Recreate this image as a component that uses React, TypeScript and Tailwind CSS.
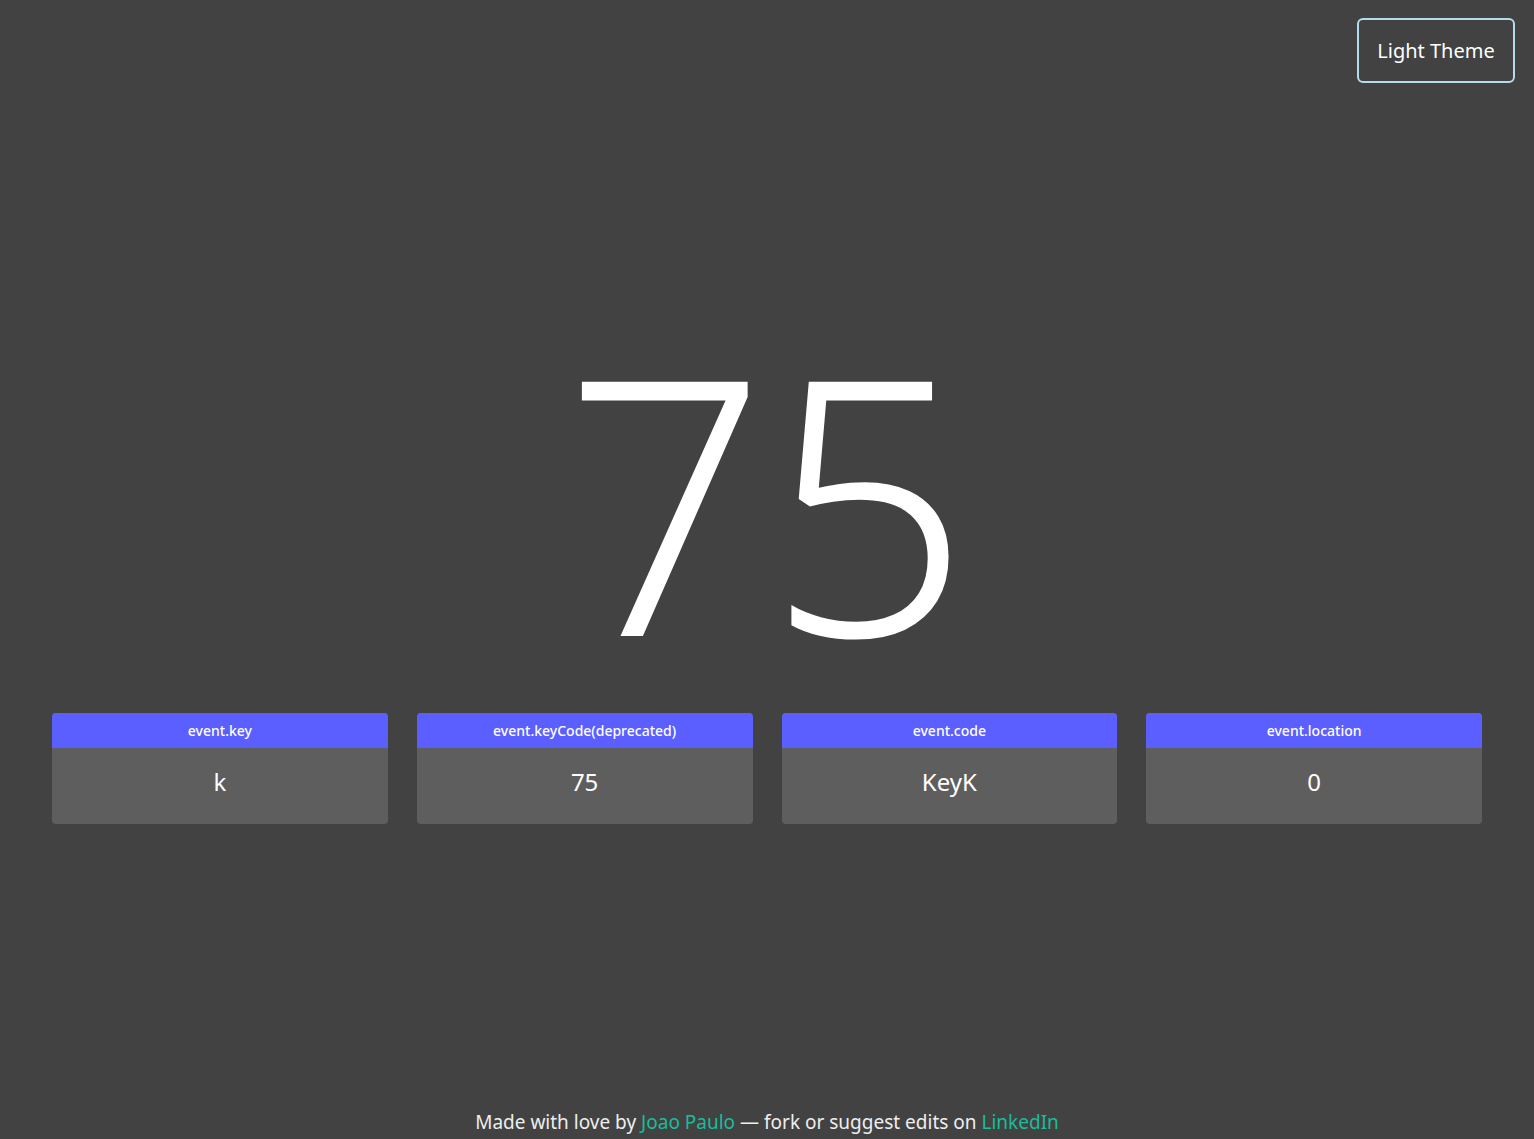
import React from "react";

const cards = [
  { label: "event.key", value: "k" },
  { label: "event.keyCode(deprecated)", value: "75" },
  { label: "event.code", value: "KeyK" },
  { label: "event.location", value: "0" },
];

export default function App() {
  return (
    <div
      className="min-h-[1139px] h-[1139px] overflow-hidden bg-[#424242] text-white flex flex-col"
      style={{ fontFamily: '"Noto Sans", "Open Sans", sans-serif' }}
    >
      <div className="flex justify-end pt-[18px] pr-[19px]">
        <button className="w-[158px] h-[65px] border-2 border-[#b3dcec] rounded-[6px] text-[20px] text-white bg-transparent flex items-center justify-center">
          Light Theme
        </button>
      </div>

      <div className="flex justify-center mt-[206px] h-[418px]">
        <div className="text-[356px] leading-[418px] font-light">75</div>
      </div>

      <div className="grid grid-cols-4 gap-[29px] px-[52px] mt-[6px]">
        {cards.map((c) => (
          <div key={c.label} className="rounded-[4px] overflow-hidden bg-[#5e5e5e] h-[111px] flex flex-col">
            <div className="h-[35px] bg-[#5c5fff] flex items-center justify-center text-[14px] leading-[20px] font-medium">
              {c.label}
            </div>
            <div className="flex-1 flex items-center justify-center text-[24px] leading-[32px] pb-[8px]">
              {c.value}
            </div>
          </div>
        ))}
      </div>

      <div className="mt-auto pb-[3px] text-center text-[19px] text-[#eeeeee]">
        Made with love by <span className="text-[#1abc9c]">Joao Paulo</span> — fork or suggest edits on{" "}
        <span className="text-[#1abc9c]">LinkedIn</span>
      </div>
    </div>
  );
}
